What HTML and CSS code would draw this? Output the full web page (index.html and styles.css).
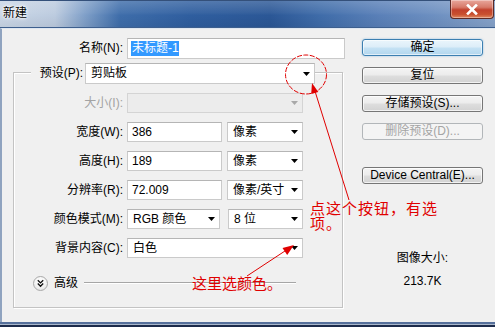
FILE: index.html
```html
<!DOCTYPE html>
<html lang="zh-CN">
<head>
<meta charset="utf-8">
<title>新建</title>
<link rel="stylesheet" href="styles.css">
</head>
<body>
<div class="window">
  <div class="titlebar">
    <span class="title">新建</span>
    <div class="close">
      <svg width="14" height="11" viewBox="0 0 14 11"><path d="M3 1.5l8 8M11 1.5l-8 8" stroke="#fff" stroke-width="2.6" stroke-linecap="square"/></svg>
    </div>
  </div>
  <div class="frame">
    <div class="left">
      <div class="row name-row">
        <span class="lbl">名称(N):</span>
        <div class="field name"><span class="selected">未标题-1</span></div>
      </div>
      <div class="group">
        <div class="preset-row">
          <span class="preset-lbl">预设(P):</span>
          <div class="field select preset"><span>剪贴板</span><svg class="arr" width="7" height="4" viewBox="0 0 7 4"><path d="M0 0h7L3.5 4z"/></svg></div>
        </div>
        <div class="row">
          <span class="lbl disabled-text">大小(I):</span>
          <div class="field select w176 disabled"><span></span><svg class="arr" width="7" height="4" viewBox="0 0 7 4"><path d="M0 0h7L3.5 4z" fill="#a8a8a8"/></svg></div>
        </div>
        <div class="row">
          <span class="lbl">宽度(W):</span>
          <div class="pair">
            <div class="field w95">386</div>
            <div class="field select w76"><span>像素</span><svg class="arr" width="7" height="4" viewBox="0 0 7 4"><path d="M0 0h7L3.5 4z"/></svg></div>
          </div>
        </div>
        <div class="row">
          <span class="lbl">高度(H):</span>
          <div class="pair">
            <div class="field w95">189</div>
            <div class="field select w76"><span>像素</span><svg class="arr" width="7" height="4" viewBox="0 0 7 4"><path d="M0 0h7L3.5 4z"/></svg></div>
          </div>
        </div>
        <div class="row">
          <span class="lbl">分辨率(R):</span>
          <div class="pair">
            <div class="field w95">72.009</div>
            <div class="field select w76"><span>像素/英寸</span><svg class="arr" width="7" height="4" viewBox="0 0 7 4"><path d="M0 0h7L3.5 4z"/></svg></div>
          </div>
        </div>
        <div class="row">
          <span class="lbl">颜色模式(M):</span>
          <div class="pair wide">
            <div class="field select w93"><span>RGB 颜色</span><svg class="arr" width="7" height="4" viewBox="0 0 7 4"><path d="M0 0h7L3.5 4z"/></svg></div>
            <div class="field select w75"><span>8 位</span><svg class="arr" width="7" height="4" viewBox="0 0 7 4"><path d="M0 0h7L3.5 4z"/></svg></div>
          </div>
        </div>
        <div class="row">
          <span class="lbl">背景内容(C):</span>
          <div class="field select w176"><span>白色</span><svg class="arr" width="7" height="4" viewBox="0 0 7 4"><path d="M0 0h7L3.5 4z"/></svg></div>
        </div>
        <div class="adv-row">
          <span class="adv-icon">
            <svg width="15" height="15" viewBox="0 0 15 15"><path d="M4.8 4.3l2.7 2.6 2.7-2.6M4.8 7.6l2.7 2.6 2.7-2.6" fill="none" stroke="#111" stroke-width="1.4"/></svg>
          </span>
          <span class="adv-text">高级</span>
          <span class="adv-line"></span>
        </div>
      </div>
    </div>
    <div class="right">
      <div class="btn default">确定</div>
      <div class="btn">复位</div>
      <div class="btn">存储预设(S)...</div>
      <div class="btn disabled">删除预设(D)...</div>
      <div class="btn device">Device Central(E)...</div>
      <div class="info">
        <div class="info-label">图像大小:</div>
        <div class="info-value">213.7K</div>
      </div>
    </div>
  </div>
  <div class="bottom-frame"></div>

  <svg class="annot" width="495" height="327" viewBox="0 0 495 327">
    <ellipse cx="306" cy="74.5" rx="20.5" ry="19.5" fill="none" stroke="#e00000" stroke-width="1" stroke-dasharray="5 1.5"/>
    <line x1="349" y1="200" x2="314" y2="88" stroke="#e00000" stroke-width="1"/>
    <polygon points="312,83 318.3,92 311.2,94" fill="#e00000"/>
    <line x1="247" y1="276" x2="288" y2="249" stroke="#e00000" stroke-width="1"/>
    <polygon points="294,245 287.2,255 282.5,248" fill="#e00000"/>
  </svg>
  <div class="note note1">
    <div class="note-line">点这个按钮，有选</div>
    <div class="note-line">项。</div>
  </div>
  <div class="note note2">这里选颜色。</div>
</div>
</body>
</html>
```

FILE: styles.css
```css
* { box-sizing: border-box; }
html, body { margin: 0; padding: 0; }
body {
  width: 495px;
  height: 327px;
  overflow: hidden;
  background: #f0f0f0;
  font-family: "Liberation Sans", "Noto Sans CJK SC", sans-serif;
  font-size: 12px;
  color: #000;
}
.window {
  position: relative;
  width: 495px;
  height: 327px;
  display: flex;
  flex-direction: column;
}

/* title bar */
.titlebar {
  flex: none;
  height: 28px;
  display: flex;
  align-items: flex-start;
  border-top: 1px solid #34507a;
  border-bottom: 1px solid #3d5f8e;
  background:
    linear-gradient(180deg, rgba(255,255,255,0.18) 0, rgba(255,255,255,0.05) 45%, rgba(0,0,0,0) 55%, rgba(0,0,0,0.05) 100%),
    linear-gradient(90deg, #c9d6e6 0, #bccbdf 55px, #7f9fc8 85px, #3e6daa 120px, #2f5e9f 190px, #2b5796 270px, #3f6ca9 320px, #5a80b8 380px, #6b8ec0 430px, #86a2c9 495px);
}
.title {
  padding: 5px 0 0 3px;
  line-height: 15px;
  font-size: 12px;
  color: #000;
  text-shadow: 0 0 5px #fff, 0 0 3px #fff, 0 0 2px #fff;
}
.close {
  margin-left: auto;
  margin-right: 1px;
  margin-top: -1px;
  width: 44px;
  height: 19px;
  display: flex;
  align-items: center;
  justify-content: center;
  border: 1px solid #5e2a25;
  border-top: none;
  border-radius: 0 0 4px 4px;
  background: linear-gradient(180deg, #e9a79c 0, #d77a6a 40%, #c2412c 55%, #c9502f 80%, #e08a62 100%);
  box-shadow: inset 0 0 0 1px rgba(255,255,255,0.35);
}

/* body frame */
.frame {
  flex: none;
  height: 294px;
  display: flex;
  border-top: 1px solid #dfe7f1;
  border-left: 2px solid #8fa3bf;
  background: #f0f0f0;
}
.bottom-frame {
  flex: none;
  height: 5px;
  background: linear-gradient(180deg, #56709b 0, #56709b 2px, #a9b7cc 2px, #a9b7cc 3px, #1c2b4b 3px);
}

.left {
  width: 343px;
  padding: 9px 0 0 11px;
  display: flex;
  flex-direction: column;
}
.row {
  display: grid;
  grid-template-columns: 109px auto;
  column-gap: 4px;
  align-items: center;
  height: 20px;
  margin-top: 9px;
}
.name-row {
  grid-template-columns: 110px 218px;
  height: 21px;
  margin-top: 0;
}
.lbl {
  text-align: right;
  white-space: nowrap;
  line-height: 15px;
}
.disabled-text { color: #a3a3a3; }

.field {
  height: 100%;
  background: #fff;
  border: 1px solid #cacaca;
  border-top-color: #b5b5b5;
  padding: 0 4px;
  display: flex;
  align-items: center;
  line-height: 15px;
  white-space: nowrap;
}
.field.name { padding-left: 3px; }
.selected {
  background: #3399ff;
  color: #fff;
  line-height: 15px;
  padding: 0 0 0 1px;
}
.select { justify-content: space-between; padding-left: 5px; padding-right: 4px; }
.select .arr { flex: none; fill: #000; }
.disabled { background: #ececec; border-color: #d4d4d4; }

.w176 { width: 176px; }
.w95 { width: 95px; }
.w76 { width: 76px; }
.w93 { width: 93px; }
.w75 { width: 75px; }
.pair { display: flex; gap: 5px; height: 100%; }
.pair.wide { gap: 8px; }

/* group box */
.group {
  margin-top: 13px;
  width: 330px;
  height: 236px;
  border: 1px solid #c3c3c3;
  box-shadow: inset 1px 1px 0 #fff, 1px 1px 0 #fff;
  display: flex;
  flex-direction: column;
}
.preset-row {
  display: flex;
  align-items: center;
  height: 21px;
  margin-top: -10px;
}
.preset-lbl {
  margin-left: 17px;
  width: 54px;
  padding-right: 2px;
  text-align: right;
  background: #f0f0f0;
  line-height: 21px;
  height: 21px;
  white-space: nowrap;
}
.preset { width: 230px; }

.adv-row {
  display: flex;
  align-items: center;
  height: 20px;
  margin-top: 15px;
  padding-left: 19px;
  padding-right: 46px;
}
.adv-icon {
  width: 15px;
  height: 15px;
  border-radius: 50%;
  border: 1px solid #a9a9a9;
  background: radial-gradient(circle at 50% 35%, #ffffff 0, #f4f4f4 50%, #dcdcdc 100%);
  display: flex;
  align-items: center;
  justify-content: center;
  overflow: hidden;
}
.adv-icon svg { flex: none; }
.adv-text { margin-left: 6px; line-height: 15px; }
.adv-line {
  flex: 1;
  margin-left: 6px;
  height: 2px;
  border-top: 1px solid #a6a6a6;
  border-bottom: 1px solid #ffffff;
}

/* right column */
.right {
  width: 138px;
  padding: 10px 0 0 17px;
  display: flex;
  flex-direction: column;
}
.btn {
  width: 121px;
  height: 17px;
  margin-bottom: 11px;
  border: 1px solid #767676;
  border-radius: 3px;
  background: linear-gradient(180deg, #f4f4f4 0, #ececec 48%, #dedede 52%, #d2d2d2 100%);
  box-shadow: inset 0 0 0 1px rgba(255,255,255,0.7);
  text-align: center;
  line-height: 15px;
  white-space: nowrap;
}
.btn.default {
  border-color: #3c7fb1;
  background: linear-gradient(180deg, #eaf5fc 0, #dcedf8 48%, #c5e2f4 52%, #b2d6ee 100%);
  box-shadow: inset 0 0 0 1px rgba(255,255,255,0.6), 0 0 2px rgba(70,150,210,0.6);
}
.btn.disabled {
  border-color: #b2b6b9;
  background: #f4f4f4;
  color: #a4a4a4;
  box-shadow: none;
}
.btn.device { margin-top: 16px; }
.info {
  width: 121px;
  margin-top: 56px;
  text-align: center;
  line-height: 15px;
}
.info-value { margin-top: 8px; }

/* annotations */
.annot {
  position: absolute;
  left: 0;
  top: 0;
  pointer-events: none;
}
.note {
  position: absolute;
  color: #e00000;
  font-family: "Noto Sans CJK SC", sans-serif;
  white-space: nowrap;
}
.note1 {
  left: 310px;
  top: 200px;
  font-size: 15px;
  letter-spacing: 1px;
  display: flex;
  flex-direction: column;
}
.note-line {
  height: 15px;
  line-height: 15px;
}
.note2 {
  left: 192px;
  top: 275px;
  font-size: 15px;
  line-height: 15px;
}
```
